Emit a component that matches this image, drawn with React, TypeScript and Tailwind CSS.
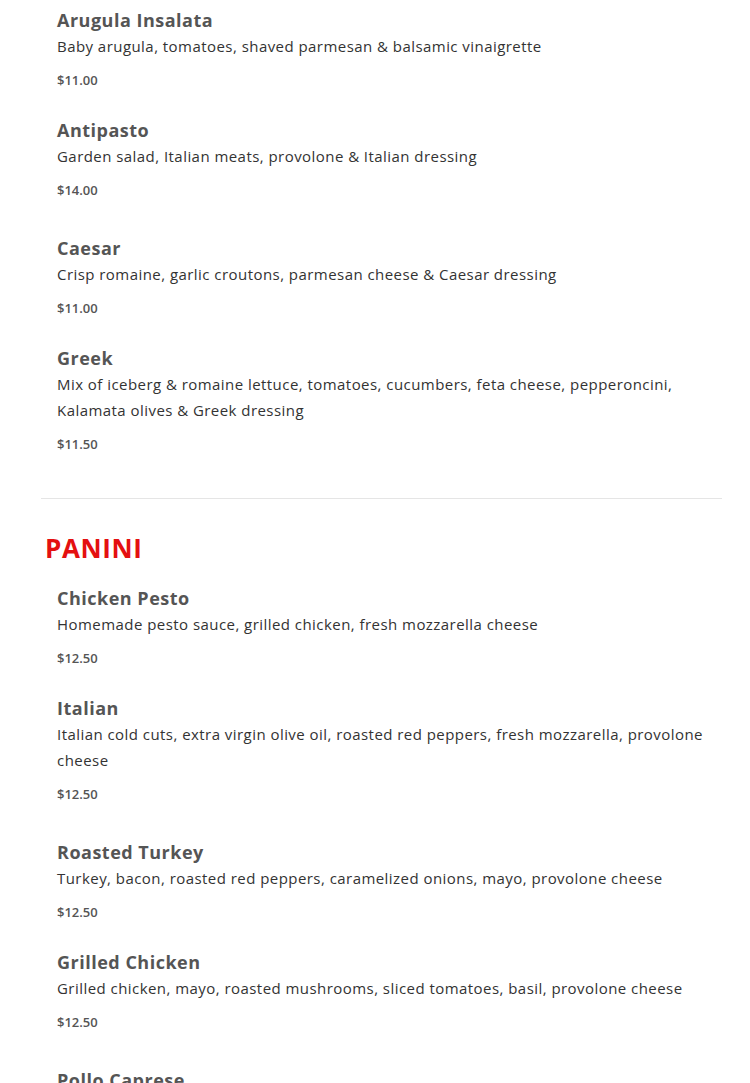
import React from 'react';

type Item = { name: string; desc: string; price: string; extra?: boolean };

const salads: Item[] = [
  { name: 'Arugula Insalata', desc: 'Baby arugula, tomatoes, shaved parmesan & balsamic vinaigrette', price: '$11.00' },
  { name: 'Antipasto', desc: 'Garden salad, Italian meats, provolone & Italian dressing', price: '$14.00', extra: true },
  { name: 'Caesar', desc: 'Crisp romaine, garlic croutons, parmesan cheese & Caesar dressing', price: '$11.00' },
  { name: 'Greek', desc: 'Mix of iceberg & romaine lettuce, tomatoes, cucumbers, feta cheese, pepperoncini, Kalamata olives & Greek dressing', price: '$11.50' },
];

const panini: Item[] = [
  { name: 'Chicken Pesto', desc: 'Homemade pesto sauce, grilled chicken, fresh mozzarella cheese', price: '$12.50' },
  { name: 'Italian', desc: 'Italian cold cuts, extra virgin olive oil, roasted red peppers, fresh mozzarella, provolone cheese', price: '$12.50', extra: true },
  { name: 'Roasted Turkey', desc: 'Turkey, bacon, roasted red peppers, caramelized onions, mayo, provolone cheese', price: '$12.50' },
  { name: 'Grilled Chicken', desc: 'Grilled chicken, mayo, roasted mushrooms, sliced tomatoes, basil, provolone cheese', price: '$12.50', extra: true },
  { name: 'Pollo Caprese', desc: 'Grilled chicken, fresh mozzarella, tomatoes, basil, balsamic glaze', price: '$12.50' },
];

const MenuItem = ({ item, last }: { item: Item; last?: boolean }) => (
  <div className={last ? '' : item.extra ? 'mb-[36px]' : 'mb-[28px]'}>
    <h3 className="text-[18px] leading-[24px] font-bold tracking-[0.5px] text-[#555555]">{item.name}</h3>
    <p className="mt-[1px] text-[15px] leading-[26px] tracking-[0.45px] text-[#333333]">{item.desc}</p>
    <p className="mt-[11px] text-[13px] leading-[20px] font-semibold text-[#555555]">{item.price}</p>
  </div>
);

export default function App() {
  return (
    <div className="min-h-screen bg-white pt-[8px] px-[41px]" style={{ fontFamily: '"Open Sans", "Noto Sans", sans-serif' }}>
      <div className="pl-4">
        {salads.map((it, i) => (
          <MenuItem key={it.name} item={it} last={i === salads.length - 1} />
        ))}
      </div>

      <div className="mt-[44px] mr-[-13px] border-t border-[#e5e5e5]" />

      <h2 className="mt-[33px] pl-1 text-[26px] leading-[32px] font-bold tracking-[0.6px] text-[#e41010]">PANINI</h2>

      <div className="mt-[22px] pl-4">
        {panini.map((it, i) => (
          <MenuItem key={it.name} item={it} last={i === panini.length - 1} />
        ))}
      </div>
    </div>
  );
}
